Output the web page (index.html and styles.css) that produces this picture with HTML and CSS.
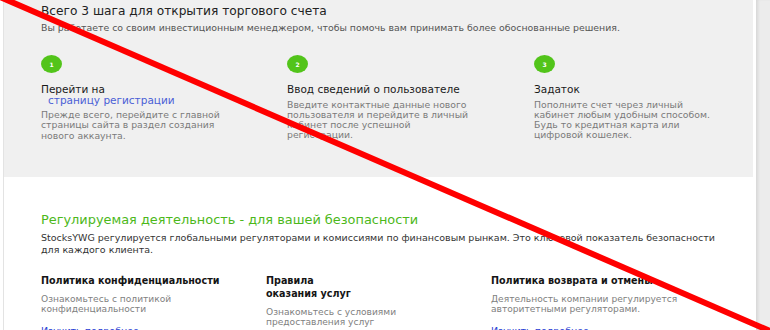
FILE: index.html
```html
<!DOCTYPE html>
<html lang="ru">
<head>
<meta charset="utf-8">
<title>Шаги</title>
<link rel="stylesheet" href="styles.css">
</head>
<body>
<div class="frame">
  <main class="page">
    <section class="steps">
      <h2 class="steps-title">Всего 3 шага для открытия торгового счета</h2>
      <p class="steps-sub">Вы работаете со своим инвестиционным менеджером, чтобы помочь вам принимать более обоснованные решения.</p>
      <div class="steps-grid">
        <div class="step">
          <div class="step-num">1</div>
          <h3 class="step-title">Перейти на<br><a class="step-link" href="#">страницу регистрации</a></h3>
          <p class="step-desc">Прежде всего, перейдите с главной страницы сайта в раздел создания нового аккаунта.</p>
        </div>
        <div class="step">
          <div class="step-num">2</div>
          <h3 class="step-title">Ввод сведений о пользователе</h3>
          <p class="step-desc">Введите контактные данные нового пользователя и перейдите в личный кабинет после успешной регистрации.</p>
        </div>
        <div class="step">
          <div class="step-num">3</div>
          <h3 class="step-title">Задаток</h3>
          <p class="step-desc">Пополните счет через личный кабинет любым удобным способом. Будь то кредитная карта или цифровой кошелек.</p>
        </div>
      </div>
    </section>
    <section class="reg">
      <h2 class="reg-title">Регулируемая деятельность - для вашей безопасности</h2>
      <p class="reg-text">StocksYWG регулируется глобальными регуляторами и комиссиями по финансовым рынкам. Это ключевой показатель безопасности для каждого клиента.</p>
      <div class="reg-grid">
        <div class="reg-item">
          <h3 class="reg-item-title">Политика конфиденциальности</h3>
          <p class="reg-item-desc">Ознакомьтесь с политикой конфиденциальности</p>
          <a class="reg-link" href="#">Изучить подробнее</a>
        </div>
        <div class="reg-item">
          <h3 class="reg-item-title">Правила<br>оказания услуг</h3>
          <p class="reg-item-desc">Ознакомьтесь с условиями предоставления услуг</p>
          <a class="reg-link" href="#">Изучить подробнее</a>
        </div>
        <div class="reg-item">
          <h3 class="reg-item-title">Политика возврата и отмены</h3>
          <p class="reg-item-desc">Деятельность компании регулируется авторитетными регуляторами.</p>
          <a class="reg-link" href="#">Изучить подробнее</a>
        </div>
      </div>
    </section>
  </main>
  <aside class="side"></aside>
</div>
<svg class="strike" width="770" height="330" viewBox="0 0 770 330" aria-hidden="true">
  <line x1="0" y1="-3" x2="770" y2="331" stroke="#ff0000" stroke-width="6"/>
</svg>
</body>
</html>
```
FILE: styles.css
```css
html, body {
  margin: 0;
  padding: 0;
}
body {
  font-family: "DejaVu Sans", "Noto Sans", sans-serif;
  background: #ffffff;
  width: 770px;
  height: 330px;
  overflow: hidden;
  position: relative;
}
.frame {
  display: flex;
  height: 330px;
  padding-left: 3px;
}
.page {
  width: 749px;
  flex: none;
  border-left: 1px solid #e3e3e3;
  margin-right: 3px;
  overflow: hidden;
}
.side {
  flex: 1;
  background: #ececec;
  box-shadow: inset 3px 0 3px -1px rgba(0, 0, 0, 0.09);
}
.steps {
  background: #f0f0f0;
  height: 177px;
  box-sizing: border-box;
  padding: 3px 0 0 37px;
}
.steps-title {
  margin: 0;
  font-size: 12.2px;
  line-height: 16px;
  font-weight: normal;
  color: #222222;
}
.steps-sub {
  margin: 3px 0 0;
  font-size: 9.4px;
  line-height: 12px;
  color: #555555;
}
.steps-grid {
  display: grid;
  grid-template-columns: 246px 247px 1fr;
  margin-top: 21px;
}
.step-num {
  width: 21px;
  height: 18px;
  border-radius: 50%;
  background: #52c41a;
  color: #ffffff;
  font-size: 6px;
  font-weight: bold;
  display: flex;
  align-items: center;
  justify-content: center;
}
.step-title {
  margin: 11px 0 0;
  font-size: 10.5px;
  line-height: 10.5px;
  font-weight: normal;
  color: #1a1a1a;
}
.step-link {
  color: #4a5fd6;
  text-decoration: none;
  margin-left: 7px;
}
.step-desc {
  margin: 5px 0 0;
  max-width: 190px;
  font-size: 9.3px;
  line-height: 10.3px;
  color: #7a7a7a;
}
.reg {
  padding: 35px 0 0 37px;
}
.reg-title {
  margin: 0;
  font-size: 12.9px;
  line-height: 16px;
  font-weight: normal;
  color: #4cb81a;
}
.reg-text {
  margin: 4px 0 0;
  max-width: 675px;
  font-size: 9.5px;
  line-height: 11.5px;
  color: #333333;
}
.reg-grid {
  display: grid;
  grid-template-columns: 225px 225px 1fr;
  margin-top: 18.6px;
}
.reg-item-title {
  margin: 0;
  font-size: 9.6px;
  line-height: 13px;
  font-weight: bold;
  color: #151515;
}
.reg-item-desc {
  margin: 7px 0 0;
  max-width: 195px;
  font-size: 9.1px;
  line-height: 10.7px;
  color: #808080;
}
.reg-link {
  display: block;
  margin-top: 10px;
  font-size: 9.5px;
  line-height: 12px;
  color: #2a40d4;
  text-decoration: none;
}
.strike {
  position: absolute;
  left: 0;
  top: 0;
  pointer-events: none;
}
```
